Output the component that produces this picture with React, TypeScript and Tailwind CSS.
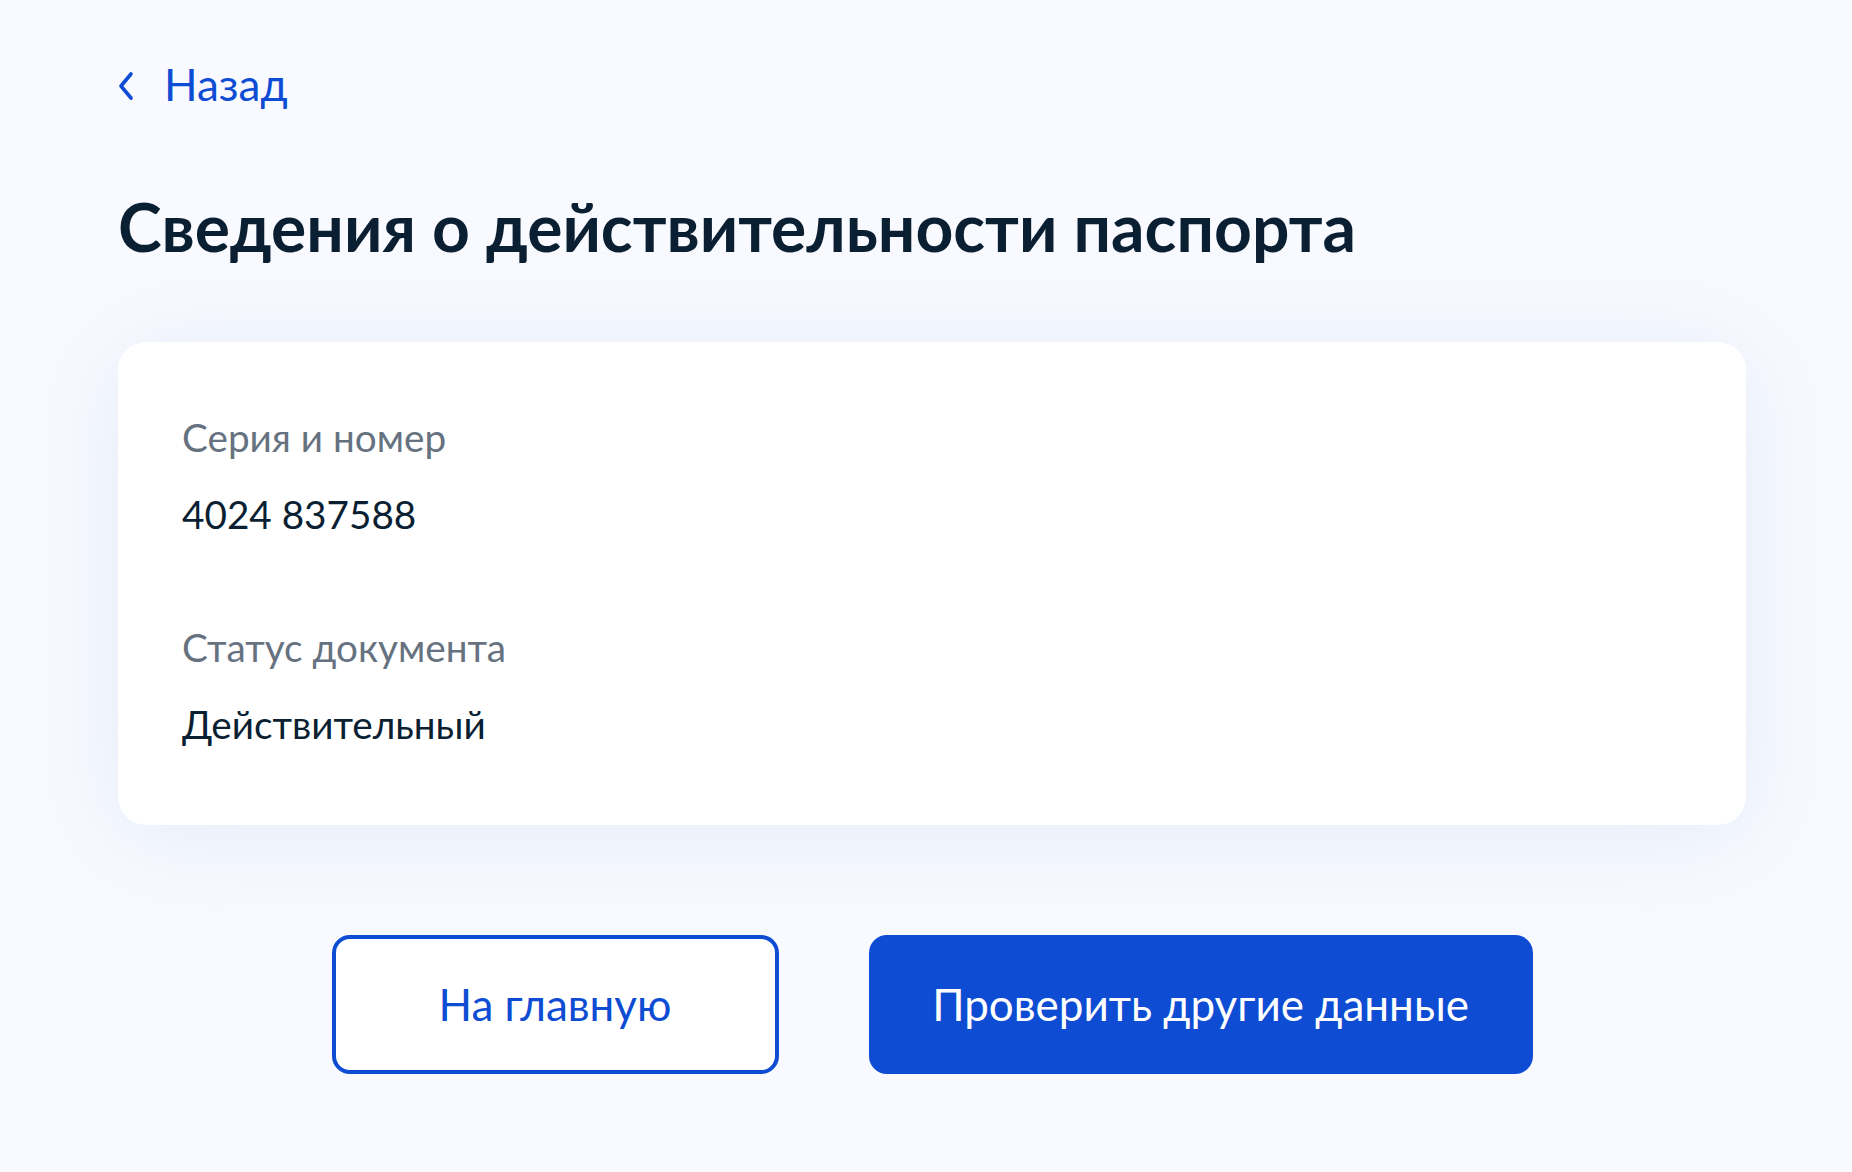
const fields = [
  { label: "Серия и номер", value: "4024 837588" },
  { label: "Статус документа", value: "Действительный" },
];

export default function App() {
  return (
    <div className="min-h-[1172px] w-full bg-[#f8faff] font-['Lato',sans-serif] text-[#0b1f33]">
      <div className="w-[1746px] pl-[118px] pt-[58px]">
        <a href="#" className="flex items-center gap-[30px] text-[44px] leading-[1.2] text-[#0d4cd3]">
          <svg width="16" height="30" viewBox="0 0 16 30" fill="none" className="mt-[3px]">
            <polyline points="13,3 3,15 13,27" stroke="currentColor" strokeWidth="3.6" strokeLinecap="round" strokeLinejoin="round" />
          </svg>
          <span>Назад</span>
        </a>

        <h1 className="mt-[76px] text-[66px] font-bold leading-[1.2]">
          Сведения о действительности паспорта
        </h1>

        <section className="mt-[76px] flex flex-col rounded-[28px] bg-white px-[64px] pt-[71px] pb-[77px] shadow-[0_10px_100px_rgba(160,180,225,0.22)]">
          {fields.map((f, i) => (
            <div key={f.label} className={i > 0 ? "mt-[85px]" : ""}>
              <p className="text-[38.7px] leading-[48px] text-[#66727f]">{f.label}</p>
              <p className="mt-[29px] text-[38.7px] leading-[48px]">{f.value}</p>
            </div>
          ))}
        </section>

        <div className="mt-[110px] flex justify-center gap-[90px]">
          <button className="flex h-[139px] w-[447px] items-center justify-center rounded-[18px] border-4 border-[#0d4cd3] bg-white text-[44px] text-[#0d4cd3]">
            На главную
          </button>
          <button className="flex h-[139px] w-[664px] items-center justify-center rounded-[18px] bg-[#0d4cd3] text-[44px] text-white">
            Проверить другие данные
          </button>
        </div>
      </div>
    </div>
  );
}
